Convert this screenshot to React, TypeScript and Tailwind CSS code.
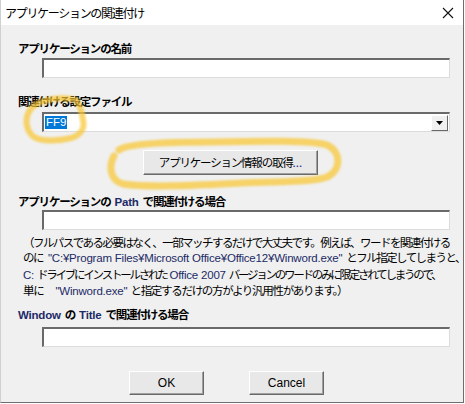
import React from "react";

const jp = "font-['Noto_Sans_CJK_JP','Noto_Sans',sans-serif]";

const Label: React.FC<{ children: React.ReactNode; className?: string }> = ({ children, className }) => (
    <div className={`pl-[17px] h-[14px] leading-[14px] text-[11.5px] font-bold tracking-[-1.2px] text-black whitespace-nowrap ${className ?? ""}`}>
        {children}
    </div>
);

// latin words inside the japanese text, set in a narrower face
const Latin: React.FC<{ children: React.ReactNode; className?: string }> = ({ children, className }) => (
    <span className={`text-[#1c2a66] tracking-[-0.2px] font-['Liberation_Sans',sans-serif] ${className ?? "mx-[4px]"}`}>
        {children}
    </span>
);

const TextBox: React.FC<{ className?: string }> = ({ className }) => (
    <div
        className={`ml-[41px] w-[408px] h-[20px] bg-white border-t-2 border-l-2 border-r border-b border-t-[#6a6a6a] border-l-[#6a6a6a] border-r-[#dcdcdc] border-b-[#dcdcdc] ${className ?? ""}`}
    />
);

const PushButton: React.FC<{ children: React.ReactNode; className?: string }> = ({ children, className }) => (
    <div
        className={`flex items-center justify-center bg-[#e8e8e8] border border-t-white border-l-white border-r-[#696969] border-b-[#696969] shadow-[inset_-1px_-1px_0_#a0a0a0] text-[11.5px] text-black whitespace-nowrap ${className ?? ""}`}
    >
        {children}
    </div>
);

export default function App() {
    return (
        <div className={`relative w-[464px] h-[403px] bg-[#f0f0f0] border-l border-l-[#d0d0d0] border-r border-r-[#6e6e6e] border-b border-b-[#6e6e6e] ${jp} overflow-hidden`}>
            {/* title bar */}
            <div className="h-[25px] bg-white flex items-center justify-between">
                <div className="pl-[4px] text-[12px] tracking-[-1.3px] text-black">アプリケーションの関連付け</div>
                <svg width="12" height="12" viewBox="0 0 12 12" className="mr-[9px]">
                    <path d="M1 1 L11 11 M11 1 L1 11" stroke="#111" strokeWidth="1.1" />
                </svg>
            </div>

            <Label className="mt-[16px]">アプリケーションの名前</Label>
            <TextBox className="mt-[3px] h-[19px]" />

            <Label className="mt-[16px]">関連付ける設定ファイル</Label>
            <div className="mt-[4px] ml-[41px] w-[408px] h-[20px] bg-white border-t-2 border-l-2 border-r border-b border-t-[#6a6a6a] border-l-[#6a6a6a] border-r-[#dcdcdc] border-b-[#dcdcdc] flex items-center">
                <span className="ml-[1px] h-[13px] leading-[13px] px-[1px] bg-[#0078d7] text-white text-[11.5px] font-['Liberation_Sans',sans-serif]">
                    FF9
                </span>
                <div className="ml-auto mr-[1px] w-[17px] h-[16px] bg-[#f0f0f0] border border-t-white border-l-white border-r-[#696969] border-b-[#696969] flex items-center justify-center">
                    <svg width="7" height="4" viewBox="0 0 7 4">
                        <path d="M0 0 H7 L3.5 4 Z" fill="#000" />
                    </svg>
                </div>
            </div>

            <PushButton className="mt-[18px] ml-[142px] w-[175px] h-[25px] tracking-[-1.2px]">
                アプリケーション情報の取得<span className="text-[#202090] tracking-normal">...</span>
            </PushButton>

            <Label className="mt-[19px]">
                アプリケーションの<Latin>Path</Latin>で関連付ける場合
            </Label>
            <TextBox className="mt-[2px]" />

            <div className="mt-[5px] pl-[22px] text-[11.5px] leading-[15.4px] tracking-[-1.55px] text-black whitespace-nowrap">
                <div>（フルパスである必要はなく、一部マッチするだけで大丈夫です。例えば、ワードを関連付ける</div>
                <div>
                    のに<Latin className="ml-[5px] mr-[4px]">"C:¥Program Files¥Microsoft Office¥Office12¥Winword.exe"</Latin>とフル指定してしまうと、
                </div>
                <div className="tracking-[-2.25px]">
                    <Latin className="mr-[3px]">C:</Latin>ドライブにインストールされた<Latin className="mx-[3px]">Office 2007</Latin>バージョンのワードのみに限定されてしまうので、
                </div>
                <div className="tracking-[-1.3px]">
                    単に<Latin className="ml-[12px] mr-[3px]">"Winword.exe"</Latin>と指定するだけの方がより汎用性があります。）
                </div>
            </div>

            <Label className="mt-[7px]">
                <Latin className="mr-[4px]">Window</Latin>の<Latin>Title</Latin>で関連付ける場合
            </Label>
            <TextBox className="mt-[6px]" />

            <div className="mt-[24px] flex pl-[128px] gap-[45px]">
                <PushButton className="w-[75px] h-[24px]">
                    <span className="font-['Liberation_Sans',sans-serif] text-[12px]">OK</span>
                </PushButton>
                <PushButton className="w-[75px] h-[24px]">
                    <span className="font-['Liberation_Sans',sans-serif] text-[12px]">Cancel</span>
                </PushButton>
            </div>

            {/* highlighter marks drawn over the dialog */}
            <svg className="absolute inset-0 pointer-events-none" width="464" height="403" viewBox="0 0 464 403">
                <defs>
                    <filter id="marker" x="-10%" y="-10%" width="120%" height="120%">
                        <feGaussianBlur stdDeviation="0.9" />
                    </filter>
                </defs>
                <g fill="none" stroke="#f8c630" strokeOpacity="0.72" strokeLinecap="round" strokeLinejoin="round" filter="url(#marker)">
                    <path
                        d="M70 99 C56 97 36 100 29 110 C23 119 25 131 33 137 C41 142 58 141 70 138 C80 135 84 128 82 120 C81 112 79 105 75 100"
                        strokeWidth="6"
                    />
                    <path
                        d="M118 150 C125 144 160 142 210 142 C260 141 310 140 326 145 C340 151 341 170 326 177 C310 183 270 181 240 183 C200 185 150 188 122 184 C108 180 108 165 113 156"
                        strokeWidth="7"
                    />
                </g>
            </svg>
        </div>
    );
}
